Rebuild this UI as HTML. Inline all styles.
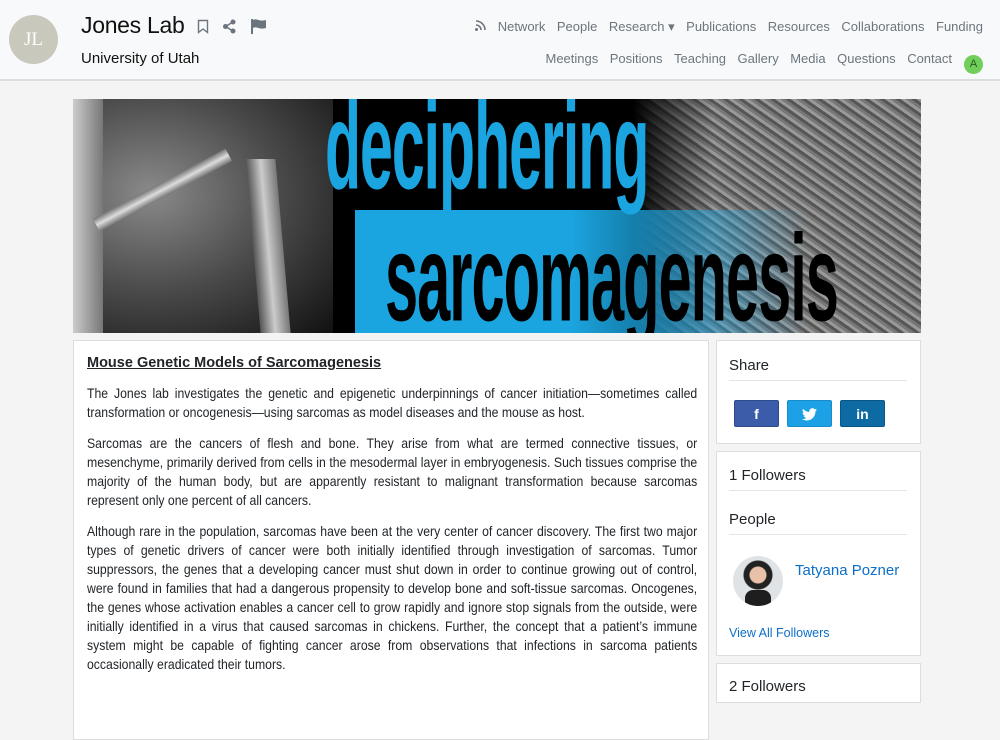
<!DOCTYPE html>
<html><head><meta charset="utf-8"><style>
*{box-sizing:border-box;margin:0;padding:0}
body{width:1000px;height:683px;overflow:hidden;background:#f4f4f4;font-family:"Liberation Sans",sans-serif;color:#212529}
.hdr{position:absolute;left:0;top:0;width:1000px;height:81px;background:#f8f9fa;border-bottom:2px solid #ddd}
.av{position:absolute;left:9px;top:15px;width:49px;height:49px;border-radius:50%;background:#c8c8bd;color:#fff;font-family:"Liberation Serif",serif;font-size:19px;text-align:center;line-height:49px}
.t1{position:absolute;left:81px;top:12px;font-size:23px;color:#111;letter-spacing:-0.3px}
.t2{position:absolute;left:81px;top:50px;font-size:15px;color:#111}
.ic{position:absolute;top:18px}
.nav{position:absolute;right:17px;font-size:13px;color:#6c757d;white-space:nowrap}
.nav span{margin-left:11.5px}
.ban{position:absolute;left:73px;top:99px;width:848px;height:234px;overflow:hidden;background:#000}
.card{position:absolute;background:#fff;border:1px solid #ddd}
.body p{font-size:13.6px;line-height:18.9px;text-align:justify;margin-bottom:12.5px}
.h{font-size:14.5px;font-weight:bold;text-decoration:underline;margin-bottom:14px}
.st{font-size:15px;border-bottom:1px solid #e5e5e5;padding-bottom:6px}
.btn{position:absolute;top:59px;width:45px;height:27px;border-radius:2px;color:#fff;font-weight:bold;text-align:center;line-height:27px;font-size:14px}
a{color:#0b6fc9}
.bt{position:absolute;font-family:'Liberation Sans',sans-serif;font-size:118px;font-weight:bold;transform-origin:0 0;letter-spacing:-2px;white-space:nowrap}
</style></head><body>
<div class="hdr">
<div class="av">JL</div>
<div class="t1">Jones Lab</div>
<svg class="ic" style="left:197px;top:19px" width="12" height="15" viewBox="0 0 12 15"><path d="M1.5 1.5h9v12l-4.5-3.5-4.5 3.5z" fill="none" stroke="#6c757d" stroke-width="1.4"/></svg>
<svg class="ic" style="left:222px;top:19px" width="15" height="15" viewBox="0 0 15 15"><circle cx="11" cy="3" r="2.5" fill="#6c757d"/><circle cx="3.5" cy="7.5" r="2.5" fill="#6c757d"/><circle cx="11" cy="12" r="2.5" fill="#6c757d"/><path d="M11 3L3.5 7.5 11 12" stroke="#6c757d" stroke-width="1.6" fill="none"/></svg>
<svg class="ic" style="left:251px;top:19px" width="16" height="15" viewBox="0 0 16 15"><path d="M1 0v15" stroke="#6c757d" stroke-width="2"/><path d="M2 1c4-2 6 2 13 0v8c-7 2-9-2-13 0z" fill="#6c757d"/></svg>
<div class="t2">University of Utah</div>
<div class="nav" style="top:19px"><svg width="11" height="11" viewBox="0 0 11 11"><circle cx="1.5" cy="9.5" r="1.5" fill="#6c757d"/><path d="M1 5a5 5 0 0 1 5 5M1 1a9 9 0 0 1 9 9" stroke="#6c757d" stroke-width="1.6" fill="none"/></svg><span>Network</span><span>People</span><span>Research ▾</span><span>Publications</span><span>Resources</span><span>Collaborations</span><span>Funding</span></div>
<div class="nav" style="top:51px"><span>Meetings</span><span>Positions</span><span>Teaching</span><span>Gallery</span><span>Media</span><span>Questions</span><span>Contact</span><span style="display:inline-block;width:19px;height:19px;border-radius:50%;background:#6fcf5a;color:#2a5a20;font-size:11px;text-align:center;line-height:19px;margin-left:12px;vertical-align:-4px">A</span></div>
</div>

<div class="ban">
<div style="position:absolute;left:0;top:0;width:260px;height:234px;background:radial-gradient(ellipse at 30% 40%,#8a8a8a,#4a4a4a 50%,#111 100%)"></div>
<div style="position:absolute;left:0;top:0;width:30px;height:234px;background:linear-gradient(90deg,#ccc,#777)"></div>
<div style="position:absolute;left:20px;top:120px;width:150px;height:14px;background:linear-gradient(#777,#ddd,#777);transform:rotate(-28deg);transform-origin:0 0"></div>
<div style="position:absolute;left:180px;top:60px;width:30px;height:174px;background:linear-gradient(90deg,#555,#ccc,#777);transform:skewX(5deg)"></div>
<div style="position:absolute;left:560px;top:0;width:288px;height:234px;background:repeating-linear-gradient(35deg,#555 0 3px,#999 3px 6px,#777 6px 9px)"></div>
<div style="position:absolute;left:560px;top:0;width:80px;height:234px;background:linear-gradient(90deg,#000,rgba(0,0,0,0))"></div>
<div style="position:absolute;left:282px;top:111px;width:566px;height:123px;background:linear-gradient(90deg,#1ba5e0 0%,#1ba5e0 38%,rgba(27,165,224,.5) 62%,rgba(27,165,224,0) 80%)"></div>
<div class="bt" style="left:252px;top:-24px;color:#1ba5e0;transform:scale(.5,1.05)">deciphering</div>
<div class="bt" style="left:312px;top:108px;color:#000;transform:scale(.505,1.05)">sarcomagenesis</div>
</div>

<div class="card" style="left:73px;top:340px;width:636px;height:400px;padding:14px 12px 0 13px">
<div class="h">Mouse Genetic Models of Sarcomagenesis</div>
<div class="body" style="width:678px;transform:scaleX(.9);transform-origin:0 0">
<p>The Jones lab investigates the genetic and epigenetic underpinnings of cancer initiation—sometimes called transformation or oncogenesis—using sarcomas as model diseases and the mouse as host.</p>
<p>Sarcomas are the cancers of flesh and bone. They arise from what are termed connective tissues, or mesenchyme, primarily derived from cells in the mesodermal layer in embryogenesis. Such tissues comprise the majority of the human body, but are apparently resistant to malignant transformation because sarcomas represent only one percent of all cancers.</p>
<p>Although rare in the population, sarcomas have been at the very center of cancer discovery. The first two major types of genetic drivers of cancer were both initially identified through investigation of sarcomas. Tumor suppressors, the genes that a developing cancer must shut down in order to continue growing out of control, were found in families that had a dangerous propensity to develop bone and soft-tissue sarcomas. Oncogenes, the genes whose activation enables a cancer cell to grow rapidly and ignore stop signals from the outside, were initially identified in a virus that caused sarcomas in chickens. Further, the concept that a patient’s immune system might be capable of fighting cancer arose from observations that infections in sarcoma patients occasionally eradicated their tumors.</p>
</div>
</div>

<div class="card" style="left:716px;top:340px;width:205px;height:104px;padding:16px 13px 0 12px">
<div class="st">Share</div>
<div class="btn" style="left:17px;background:#3b5ca8;border:1px solid #2d4a8a">f</div>
<div class="btn" style="left:70px;background:#1da1e6;border:1px solid #178cc8"><svg width="15" height="13" viewBox="0 0 24 20" style="vertical-align:-2px"><path fill="#fff" d="M24 2.4a10 10 0 0 1-2.8.8A5 5 0 0 0 23.3.4a10 10 0 0 1-3.1 1.2A4.9 4.9 0 0 0 11.8 6 14 14 0 0 1 1.7.9a4.9 4.9 0 0 0 1.5 6.6 5 5 0 0 1-2.2-.6 4.9 4.9 0 0 0 3.9 4.9 5 5 0 0 1-2.2.1 4.9 4.9 0 0 0 4.6 3.4A9.9 9.9 0 0 1 0 17.300 14 14 0 0 0 7.5 19.5c9 0 14-7.5 14-14v-.6A10 10 0 0 0 24 2.4z"/></svg></div>
<div class="btn" style="left:123px;background:#0d6aa3;border:1px solid #0a5785">in</div>
</div>

<div class="card" style="left:716px;top:451px;width:205px;height:205px;padding:15px 13px 0 12px">
<div class="st">1 Followers</div>
<div class="st" style="margin-top:20px">People</div>
<div style="position:absolute;left:16px;top:104px;width:50px;height:50px;border-radius:50%;background:radial-gradient(circle at 50% 38%,#e9c0a8 0 8px,#222 9px 14px,#dfe3e6 15px);overflow:hidden"><div style="position:absolute;left:12px;top:34px;width:26px;height:20px;background:#1e1e1e;border-radius:8px 8px 0 0"></div></div>
<a style="position:absolute;left:78px;top:110px;font-size:15px;text-decoration:none">Tatyana Pozner</a>
<a style="position:absolute;left:12px;top:174px;font-size:12.5px;text-decoration:none">View All Followers</a>
</div>

<div class="card" style="left:716px;top:663px;width:205px;height:40px;padding:14px 12px"><div style="font-size:15px">2 Followers</div></div>
</body></html>
